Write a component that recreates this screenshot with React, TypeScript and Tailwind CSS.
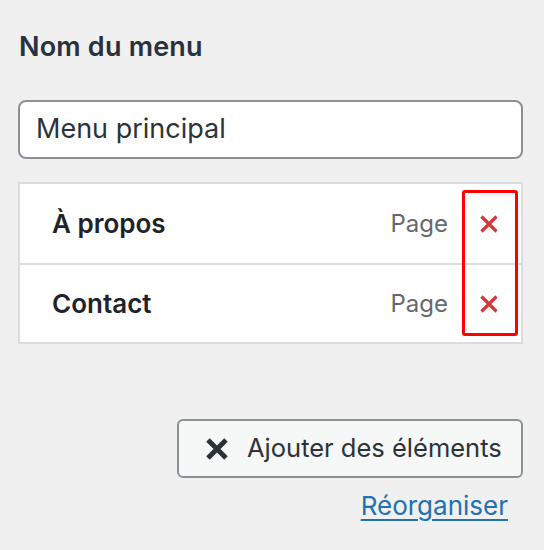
const font = { fontFamily: 'Inter, "Liberation Sans", Arial, sans-serif' };

const items = [
  { title: "À propos", type: "Page" },
  { title: "Contact", type: "Page" },
];

const RemoveIcon = () => (
  <svg width="20" height="20" viewBox="0 0 20 20" className="block">
    <path d="M2.5 2.5 L17.5 17.5 M17.5 2.5 L2.5 17.5" stroke="#d63638" strokeWidth="3.2" strokeLinecap="butt" />
  </svg>
);

const AddIcon = () => (
  <svg width="24" height="22" viewBox="0 0 24 22" className="block">
    <path d="M3 2 L21 20 M21 2 L3 20" stroke="#2c3338" strokeWidth="5" strokeLinecap="butt" />
  </svg>
);

const App = () => {
  return (
    <div
      className="relative w-[544px] h-[550px] bg-[#f0f0f1] pl-[18px] pr-[21px] pt-8 flex flex-col"
      style={font}
    >
      <h2 className="text-[27px] leading-[30px] font-semibold tracking-[0.2px] text-[#29303e] pl-[1px]">
        Nom du menu
      </h2>

      <div className="mt-[38px] h-[59px] border-2 border-[#8c8f94] rounded-[8px] bg-white flex items-center pl-[16px] text-[27px] text-[#2c3338]">
        Menu principal
      </div>

      <ul className="mt-[23px] border-2 border-[#dcdcde] bg-white">
        {items.map((item, i) => (
          <li
            key={item.title}
            className={`flex items-center h-[79px] pl-[32px] pr-[22px] ${i > 0 ? "border-t-2 border-[#dcdcde]" : ""}`}
          >
            <span className="flex-1 text-[26px] font-semibold text-[#1d2327]">{item.title}</span>
            <span className="text-[24px] text-[#646970]">{item.type}</span>
            <span className="ml-[31px]">
              <RemoveIcon />
            </span>
          </li>
        ))}
      </ul>

      <div className="mt-[75px] flex justify-end">
        <button className="w-[346px] h-[59px] border-2 border-[#8c8f94] rounded-[6px] bg-[#f6f7f7] flex items-center pl-[26px] text-[25.5px] text-[#2c3338]">
          <AddIcon />
          <span className="ml-[18px]">Ajouter des éléments</span>
        </button>
      </div>

      <div className="mt-[13px] flex justify-end pr-[15px]">
        <a href="#" className="text-[26px] leading-[30px] text-[#2271b1] underline underline-offset-[4px]">
          Réorganiser
        </a>
      </div>

      <div className="absolute left-[462px] top-[190px] w-[56px] h-[146px] border-[3px] border-[#ff0000] rounded-[3px]" />
    </div>
  );
};

export default App;
